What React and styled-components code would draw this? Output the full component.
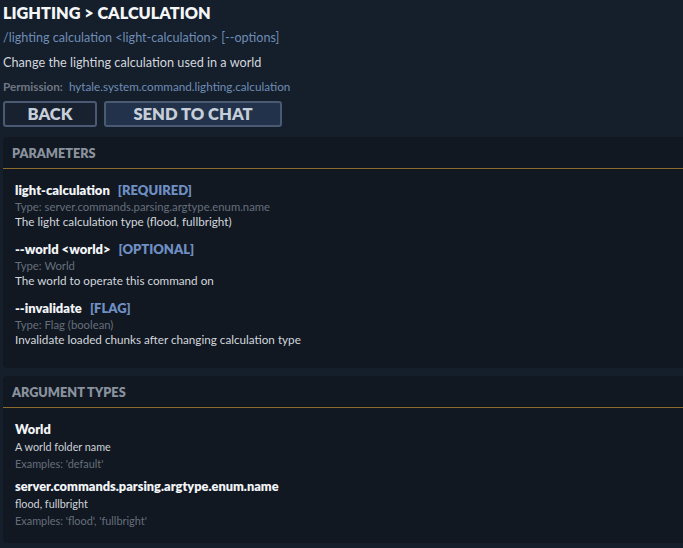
import styled, { createGlobalStyle } from "styled-components";

const GlobalStyle = createGlobalStyle`
  html, body {
    margin: 0;
    padding: 0;
    background: #151e2b;
  }
  body {
    font-family: Lato, "Noto Sans", "Liberation Sans", sans-serif;
    color: #d3d7dd;
  }
`;

const Page = styled.div`
  width: 683px;
  height: 548px;
  padding: 3px 0 0 3px;
  box-sizing: border-box;
  overflow: hidden;
  background: #151e2b;
`;

const Title = styled.h1`
  margin: 0;
  font-size: 16.3px;
  font-weight: 800;
  color: #f4f6f8;
  line-height: 20px;
`;

const Usage = styled.div`
  margin-top: 7px;
  font-size: 12.6px;
  line-height: 16px;
  color: #6f8db5;
`;

const Description = styled.div`
  margin-top: 8px;
  font-size: 12.7px;
  line-height: 16px;
  color: #d3d7dd;
`;

const Permission = styled.div`
  margin-top: 9px;
  font-size: 11.7px;
  line-height: 14px;
  color: #6f8db5;
  span {
    color: #6f7784;
    font-weight: 700;
    margin-right: 6px;
  }
`;

const Buttons = styled.div`
  display: flex;
  gap: 7px;
  margin-top: 8px;
`;

const Button = styled.button`
  height: 26px;
  width: ${p => p.$w}px;
  box-sizing: border-box;
  border: 2px solid #4a5a72;
  border-radius: 3px;
  background: ${p => (p.$primary ? "#22324a" : "#172130")};
  color: #c6ced9;
  font-family: inherit;
  font-size: 16.6px;
  font-weight: 800;
  padding: 0;
  line-height: 20px;
`;

const Panel = styled.section`
  margin-top: ${p => p.$top}px;
  background: #111822;
  border-radius: 4px 0 0 4px;
  padding-bottom: ${p => p.$pb}px;
`;

const PanelHeader = styled.div`
  height: 31px;
  padding-left: 9px;
  display: flex;
  align-items: center;
  font-size: 12.7px;
  font-weight: 800;
  color: #8a929e;
  border-bottom: 1px solid #8a6c2c;
`;

const PanelBody = styled.div`
  padding: ${p => p.$pad};
  display: flex;
  flex-direction: column;
  gap: ${p => p.$gap}px;
`;

const Item = styled.div`
  display: flex;
  flex-direction: column;
`;

const ParamName = styled.div`
  font-size: 13px;
  font-weight: 800;
  color: #f2f4f7;
  line-height: 17px;
`;

const Tag = styled.span`
  color: #6f8fc2;
  margin-left: 8px;
`;

const TypeLine = styled.div`
  font-size: 11.3px;
  line-height: 15px;
  color: #666e7a;
`;

const ParamDesc = styled.div`
  font-size: 11.7px;
  line-height: 15px;
  color: #d3d7dd;
`;

const ArgName = styled.div`
  font-size: 12.8px;
  font-weight: 800;
  color: #f2f4f7;
  line-height: 18px;
`;

const ArgDesc = styled.div`
  font-size: 10.8px;
  line-height: 17px;
  color: #cfd3d9;
`;

const Examples = styled.div`
  font-size: 10.9px;
  line-height: 17px;
  color: #666e7a;
`;

const params = [
  {
    name: "light-calculation",
    tag: "[REQUIRED]",
    type: "Type: server.commands.parsing.argtype.enum.name",
    desc: "The light calculation type (flood, fullbright)",
  },
  {
    name: "--world <world>",
    tag: "[OPTIONAL]",
    type: "Type: World",
    desc: "The world to operate this command on",
  },
  {
    name: "--invalidate",
    tag: "[FLAG]",
    type: "Type: Flag (boolean)",
    desc: "Invalidate loaded chunks after changing calculation type",
  },
];

const argTypes = [
  { name: "World", desc: "A world folder name", ex: "Examples: 'default'" },
  {
    name: "server.commands.parsing.argtype.enum.name",
    desc: "flood, fullbright",
    ex: "Examples: 'flood', 'fullbright'",
  },
];

export default function App() {
  return (
    <Page>
      <GlobalStyle />
      <Title>LIGHTING &gt; CALCULATION</Title>
      <Usage>/lighting calculation &lt;light-calculation&gt; [--options]</Usage>
      <Description>Change the lighting calculation used in a world</Description>
      <Permission>
        <span>Permission:</span>hytale.system.command.lighting.calculation
      </Permission>
      <Buttons>
        <Button $w={94}>BACK</Button>
        <Button $w={178} $primary>SEND TO CHAT</Button>
      </Buttons>

      <Panel $top={10} $pb={21}>
        <PanelHeader>PARAMETERS</PanelHeader>
        <PanelBody $pad="13px 12px 0 12px" $gap={12}>
          {params.map(p => (
            <Item key={p.name}>
              <ParamName>
                {p.name}
                <Tag>{p.tag}</Tag>
              </ParamName>
              <TypeLine>{p.type}</TypeLine>
              <ParamDesc>{p.desc}</ParamDesc>
            </Item>
          ))}
        </PanelBody>
      </Panel>

      <Panel $top={8} $pb={14}>
        <PanelHeader>ARGUMENT TYPES</PanelHeader>
        <PanelBody $pad="12px 12px 0 12px" $gap={5}>
          {argTypes.map(a => (
            <Item key={a.name}>
              <ArgName>{a.name}</ArgName>
              <ArgDesc>{a.desc}</ArgDesc>
              <Examples>{a.ex}</Examples>
            </Item>
          ))}
        </PanelBody>
      </Panel>
    </Page>
  );
}
